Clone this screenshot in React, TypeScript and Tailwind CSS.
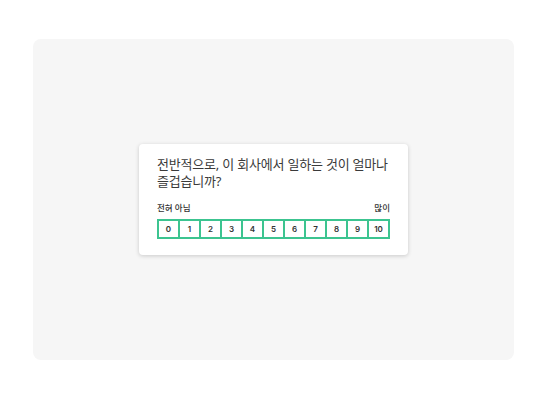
export default function App() {
  const nums = [0, 1, 2, 3, 4, 5, 6, 7, 8, 9, 10];
  return (
    <div className="h-[400px] w-full bg-white px-[33px] pt-[39px] pb-[40px] font-['Noto_Sans','Noto_Sans_CJK_KR',sans-serif]">
      <div className="flex h-full items-center justify-center rounded-lg bg-[#f6f6f6]">
        <div className="w-[269px] rounded bg-white px-[18px] pt-[12px] pb-[16px] shadow-[0_1px_4px_rgba(0,0,0,0.18)]">
          <p className="break-keep text-[13px] leading-[17px] tracking-[-0.2px] text-[#3a3a3a]">
            전반적으로, 이 회사에서 일하는 것이 얼마나 즐겁습니까?
          </p>
          <div className="mt-[12px] flex justify-between text-[8.5px] font-medium leading-[12px] text-[#333]">
            <span>전혀 아님</span>
            <span>많이</span>
          </div>
          <div className="mt-[5px] flex border border-[#3cc490]">
            {nums.map((n) => (
              <div
                key={n}
                className="flex h-[18px] flex-1 items-center justify-center border border-[#3cc490] font-['Inter',sans-serif] text-[8px] font-semibold text-[#333]"
              >
                {n}
              </div>
            ))}
          </div>
        </div>
      </div>
    </div>
  );
}
